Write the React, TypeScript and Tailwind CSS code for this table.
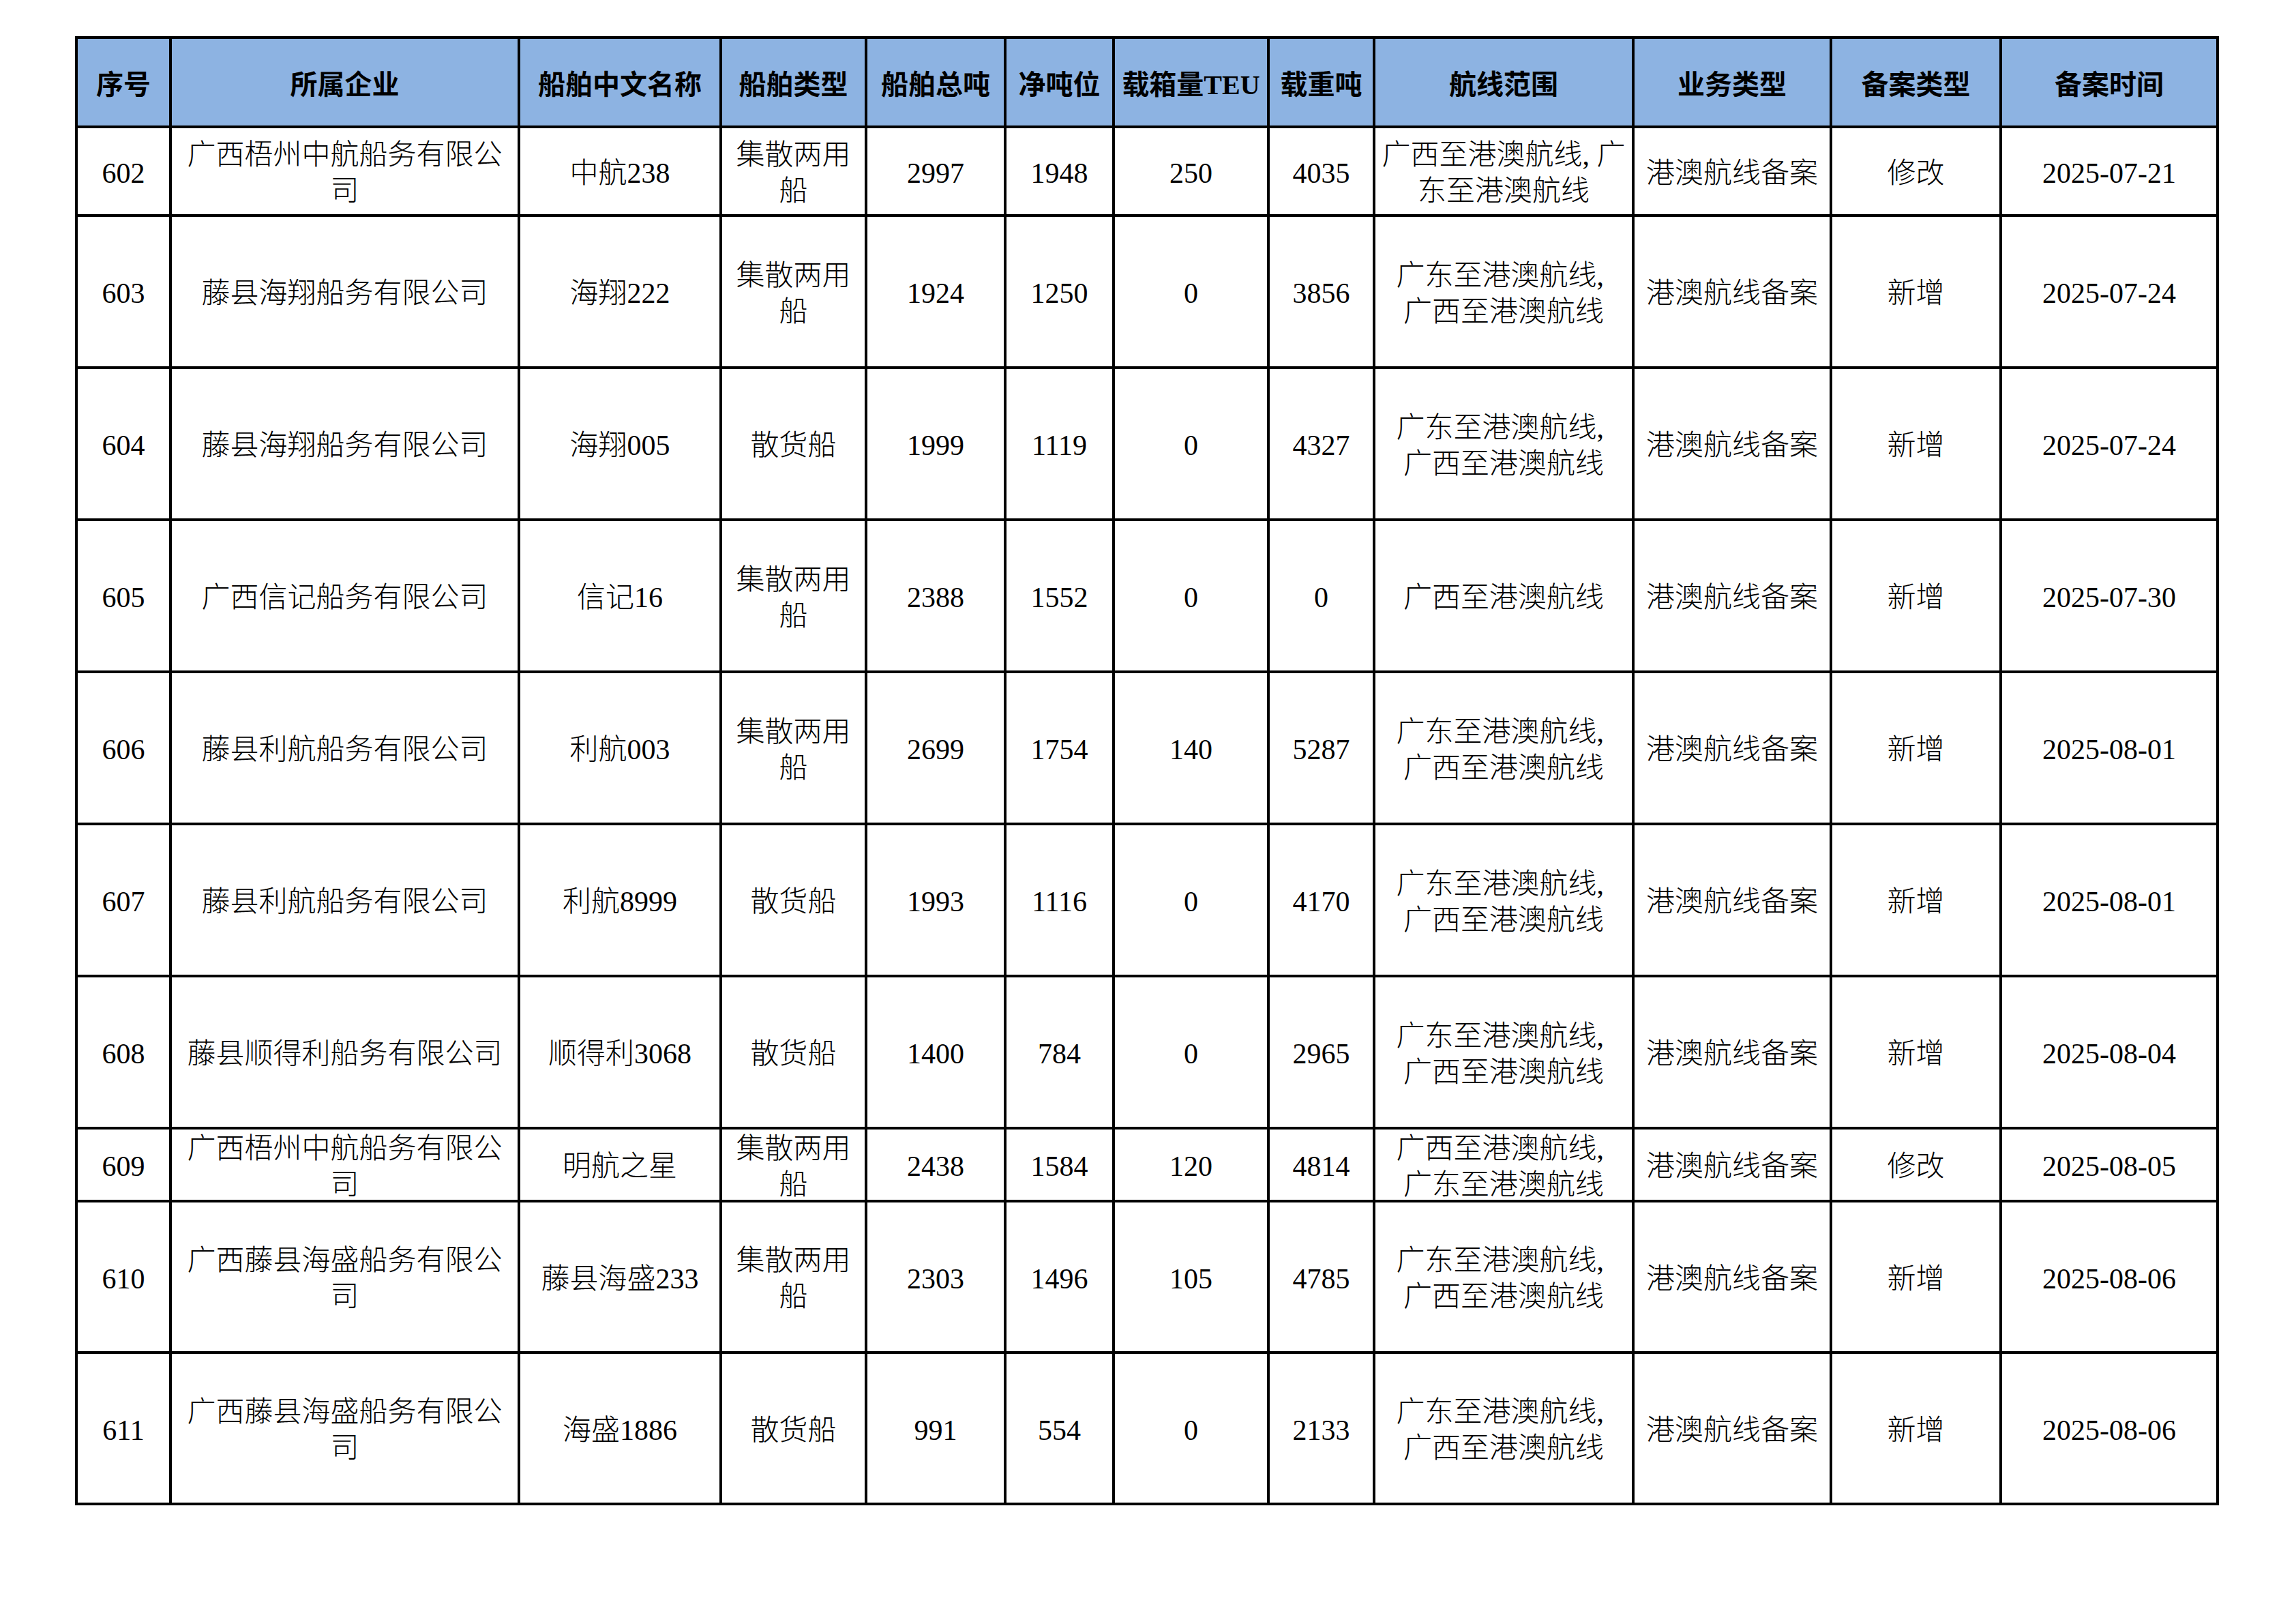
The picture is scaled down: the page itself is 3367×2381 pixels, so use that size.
const COLS = 'grid grid-cols-[138px_511px_296px_213px_204px_159px_227px_155px_380px_290px_249px_318px]'

const HEADERS = ['序号', '所属企业', '船舶中文名称', '船舶类型', '船舶总吨', '净吨位', '载箱量TEU', '载重吨', '航线范围', '业务类型', '备案类型', '备案时间']

type Row = {
  h: string
  cells: string[][]
}

const GD = ['广东至港澳航线,', '广西至港澳航线']

const ROWS: Row[] = [
  { h: 'h-[130px]', cells: [['602'], ['广西梧州中航船务有限公', '司'], ['中航238'], ['集散两用', '船'], ['2997'], ['1948'], ['250'], ['4035'], ['广西至港澳航线,广', '东至港澳航线'], ['港澳航线备案'], ['修改'], ['2025-07-21']] },
  { h: 'h-[223px]', cells: [['603'], ['藤县海翔船务有限公司'], ['海翔222'], ['集散两用', '船'], ['1924'], ['1250'], ['0'], ['3856'], GD, ['港澳航线备案'], ['新增'], ['2025-07-24']] },
  { h: 'h-[223px]', cells: [['604'], ['藤县海翔船务有限公司'], ['海翔005'], ['散货船'], ['1999'], ['1119'], ['0'], ['4327'], GD, ['港澳航线备案'], ['新增'], ['2025-07-24']] },
  { h: 'h-[223px]', cells: [['605'], ['广西信记船务有限公司'], ['信记16'], ['集散两用', '船'], ['2388'], ['1552'], ['0'], ['0'], ['广西至港澳航线'], ['港澳航线备案'], ['新增'], ['2025-07-30']] },
  { h: 'h-[223px]', cells: [['606'], ['藤县利航船务有限公司'], ['利航003'], ['集散两用', '船'], ['2699'], ['1754'], ['140'], ['5287'], GD, ['港澳航线备案'], ['新增'], ['2025-08-01']] },
  { h: 'h-[223px]', cells: [['607'], ['藤县利航船务有限公司'], ['利航8999'], ['散货船'], ['1993'], ['1116'], ['0'], ['4170'], GD, ['港澳航线备案'], ['新增'], ['2025-08-01']] },
  { h: 'h-[223px]', cells: [['608'], ['藤县顺得利船务有限公司'], ['顺得利3068'], ['散货船'], ['1400'], ['784'], ['0'], ['2965'], GD, ['港澳航线备案'], ['新增'], ['2025-08-04']] },
  { h: 'h-[107px]', cells: [['609'], ['广西梧州中航船务有限公', '司'], ['明航之星'], ['集散两用', '船'], ['2438'], ['1584'], ['120'], ['4814'], ['广西至港澳航线,', '广东至港澳航线'], ['港澳航线备案'], ['修改'], ['2025-08-05']] },
  { h: 'h-[222px]', cells: [['610'], ['广西藤县海盛船务有限公', '司'], ['藤县海盛233'], ['集散两用', '船'], ['2303'], ['1496'], ['105'], ['4785'], GD, ['港澳航线备案'], ['新增'], ['2025-08-06']] },
  { h: 'h-[222px]', cells: [['611'], ['广西藤县海盛船务有限公', '司'], ['海盛1886'], ['散货船'], ['991'], ['554'], ['0'], ['2133'], GD, ['港澳航线备案'], ['新增'], ['2025-08-06']] },
]

// half-width comma like the source sheet
function Line({ text }: { text: string }) {
  const parts = text.split(',')
  return (
    <div className="whitespace-nowrap">
      {parts.map((p, i) => (
        <span key={i}>
          {p}
          {i < parts.length - 1 && <span className="inline-block w-[21px] text-left">,</span>}
        </span>
      ))}
    </div>
  )
}

export default function App() {
  return (
    <div className="w-[3367px] h-[2381px] bg-white pl-[110px] pt-[53px] font-['Liberation_Serif','Noto_Sans_CJK_SC',serif] text-black">
      <div className="w-[3144px] border-l-4 border-t-4 border-black">
        {/* header */}
        <div className={`${COLS} h-[131px] bg-[#8db3e2]`}>
          {HEADERS.map(h => (
            <div
              key={h}
              className="flex items-center justify-center border-r-4 border-b-4 border-black pt-[8px] text-[40px] font-bold whitespace-nowrap"
            >
              {h}
            </div>
          ))}
        </div>

        {ROWS.map((row, r) => (
          <div key={r} className={`${COLS} ${row.h}`}>
            {row.cells.map((lines, c) => (
              <div
                key={c}
                className="flex flex-col items-center justify-center border-r-4 border-b-4 border-black pt-[6px] text-center text-[42px] leading-[53px] font-light overflow-hidden"
              >
                {lines.map((l, i) => <Line key={i} text={l} />)}
              </div>
            ))}
          </div>
        ))}
      </div>
    </div>
  )
}
